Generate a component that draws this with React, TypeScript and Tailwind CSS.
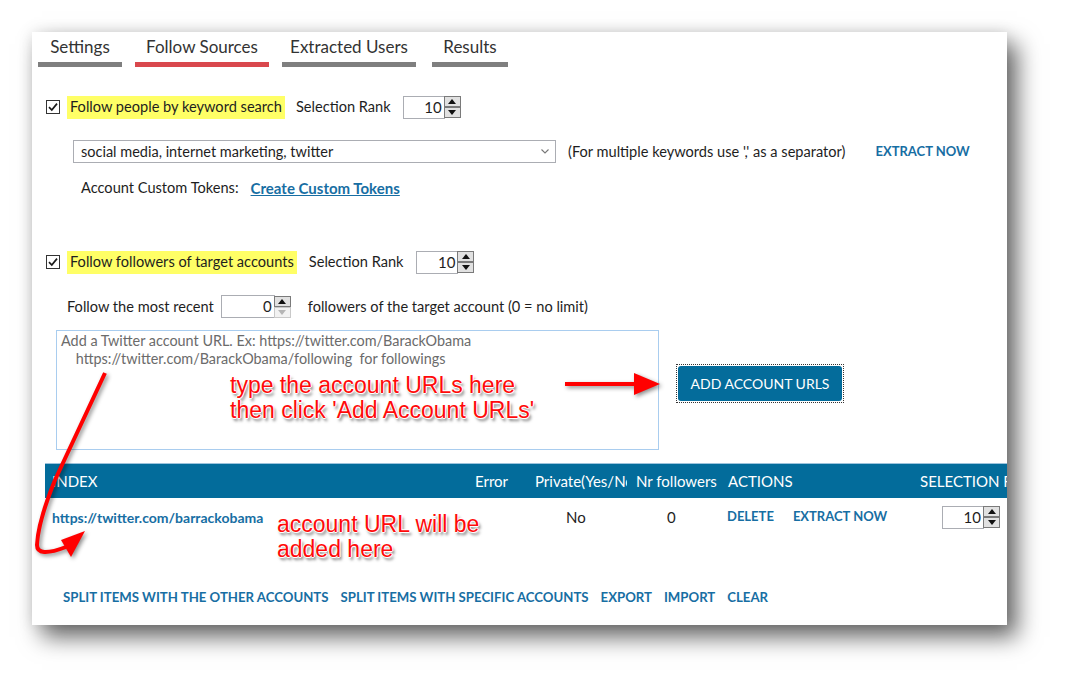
import React from 'react';

const LINK = 'text-[#176ea3]';

const Check = () => (
  <svg width="14" height="14" viewBox="0 0 14 14" className="shrink-0">
    <rect x="0.5" y="0.5" width="13" height="13" fill="#fff" stroke="#333" />
    <path d="M3 7.2 L5.8 10 L11 3.6" fill="none" stroke="#1a1a1a" strokeWidth="1.7" />
  </svg>
);

const Arrow = ({ up, disabled }: { up?: boolean; disabled?: boolean }) => (
  <div
    className={
      'flex h-[11px] items-center justify-center border ' +
      (disabled ? 'border-[#c9c9c9] bg-[#f2f2f2]' : 'border-[#7a7a7a] bg-[#e1e1e1]')
    }
  >
    <svg width="8" height="5" viewBox="0 0 8 5">
      <path d={up ? 'M0 5 L4 0 L8 5 Z' : 'M0 0 L4 5 L8 0 Z'} fill={disabled ? '#b5b5b5' : '#111'} />
    </svg>
  </div>
);

const Spinner = ({ value, w = 42, downOff }: { value: string; w?: number; downOff?: boolean }) => (
  <div className="flex items-center">
    <div
      className="flex h-[23px] items-center justify-end border border-[#abadb3] bg-white pr-[2px] text-[15px] text-[#1e1e1e]"
      style={{ width: w }}
    >
      {value}
    </div>
    <div className="-ml-[1px] flex w-[17px] flex-col">
      <Arrow up />
      <Arrow disabled={downOff} />
    </div>
  </div>
);

const Tab = ({ label, w, active, ml }: { label: string; w: number; active?: boolean; ml: string }) => (
  <div className={'flex flex-col ' + ml} style={{ width: w }}>
    <div className="flex h-[29px] items-center justify-center text-[17px] text-[#333]">{label}</div>
    <div className={'mt-[1px] h-[5px] ' + (active ? 'bg-[#d9484d]' : 'bg-[#7f7f7f]')} />
  </div>
);

const note =
  "[font-family:'Liberation_Sans',Arial,sans-serif] text-[23px] leading-[25px] text-[#ff0a0a] [text-shadow:1px_0_0_#fff,-1px_0_0_#fff,0_1px_0_#fff,0_-1px_0_#fff,2px_3px_3px_rgba(0,0,0,0.55)]";

export default function App() {
  return (
    <div className="relative h-[689px] w-[1072px] overflow-hidden bg-white pl-[32px] pt-[32px] [font-family:'Lato','Noto_Sans',sans-serif] text-[14.6px] text-[#1e1e1e]">
      <div className="h-[593px] w-[975px] overflow-hidden bg-white shadow-[10px_12px_22px_rgba(0,0,0,0.6),0_0_14px_rgba(0,0,0,0.1)]">
        {/* tabs */}
        <div className="flex pl-[6px]">
          <Tab label="Settings" w={84} ml="" />
          <Tab label="Follow Sources" w={134} ml="ml-[13px]" active />
          <Tab label="Extracted Users" w={134} ml="ml-[13px]" />
          <Tab label="Results" w={76} ml="ml-[16px]" />
        </div>

        {/* keyword search */}
        <div className="mt-[28px] flex h-[24px] items-center pl-[14px]">
          <Check />
          <div className="ml-[7px] flex h-[23px] items-center bg-[#ffff66] px-[3px]">Follow people by keyword search</div>
          <span className="ml-[11px]">Selection Rank</span>
          <div className="ml-[12px]">
            <Spinner value="10" />
          </div>
        </div>

        <div className="mt-[21px] flex h-[23px] items-center pl-[41px]">
          <div className="flex h-[23px] w-[483px] items-center justify-between border border-[#abadb3] pl-[7px] pr-[6px] text-[14.5px]">
            <span>social media, internet marketing, twitter</span>
            <svg width="8" height="5" viewBox="0 0 8 5">
              <path d="M0.5 0.5 L4 4 L7.5 0.5" fill="none" stroke="#777" strokeWidth="1.1" />
            </svg>
          </div>
          <span className="ml-[12px]">(For multiple keywords use ',' as a separator)</span>
          <span className={'ml-[30px] text-[13px] font-bold ' + LINK}>EXTRACT NOW</span>
        </div>

        <div className="mt-[15px] flex h-[20px] items-center pl-[49px]">
          <span>Account Custom Tokens:</span>
          <span className={'ml-[12px] text-[15px] font-bold underline ' + LINK}>Create Custom Tokens</span>
        </div>

        {/* target accounts */}
        <div className="mt-[52px] flex h-[24px] items-center pl-[14px]">
          <Check />
          <div className="ml-[7px] flex h-[23px] items-center bg-[#ffff66] px-[3px]">Follow followers of target accounts</div>
          <span className="ml-[12px]">Selection Rank</span>
          <div className="ml-[13px]">
            <Spinner value="10" />
          </div>
        </div>

        <div className="mt-[21px] flex h-[23px] items-center pl-[35px]">
          <span>Follow the most recent</span>
          <div className="ml-[7px]">
            <Spinner value="0" w={54} downOff />
          </div>
          <span className="ml-[17px]">followers of the target account (0 = no limit)</span>
        </div>

        <div className="mt-[12px] flex items-start">
          <div className="ml-[24px] h-[120px] w-[603px] border border-[#a9cdef] pl-[4px] pt-[1px] text-[14.4px] leading-[18px] text-[#6b6b6b]">
            <div>Add a Twitter account URL. Ex: https://twitter.com/BarackObama</div>
            <div className="whitespace-pre">{'    https://twitter.com/BarackObama/following  for followings'}</div>
          </div>
          <div className="ml-[17px] mt-[34px] border border-dotted border-[#333] p-[1px]">
            <div className="flex h-[35px] w-[164px] items-center justify-center rounded-[3px] bg-[#046c9b] text-[14px] text-white">
              ADD ACCOUNT URLS
            </div>
          </div>
        </div>

        {/* table */}
        <div className="ml-[13px] mt-[13px] flex h-[35px] w-[1000px] items-center whitespace-nowrap border-t border-[#9cc3dc] bg-[#036c9b] text-[15px] text-white">
          <div className="w-[425px] pl-[7px]">INDEX</div>
          <div className="w-[60px] pl-[5px]">Error</div>
          <div className="w-[97px] overflow-hidden pl-[5px]">Private(Yes/No)</div>
          <div className="w-[97px] pl-[9px]">Nr followers</div>
          <div className="w-[191px] pl-[4px]">ACTIONS</div>
          <div className="pl-[5px]">SELECTION RANK</div>
        </div>
        <div className="ml-[13px] flex h-[38px] w-[1000px] items-center whitespace-nowrap">
          <div className={'w-[425px] pl-[7px] text-[14px] font-bold ' + LINK}>https://twitter.com/barrackobama</div>
          <div className="w-[60px]" />
          <div className="w-[97px] pl-[36px] text-[15px]">No</div>
          <div className="w-[97px] pl-[40px] text-[15px]">0</div>
          <div className={'flex w-[191px] pl-[3px] text-[13px] font-bold ' + LINK}>
            <span>DELETE</span>
            <span className="ml-[19px]">EXTRACT NOW</span>
          </div>
          <div className="pl-[27px]">
            <Spinner value="10" />
          </div>
        </div>

        <div className={'mt-[52px] flex h-[20px] items-center gap-[12px] pl-[31px] text-[13.2px] font-bold ' + LINK}>
          <span>SPLIT ITEMS WITH THE OTHER ACCOUNTS</span>
          <span>SPLIT ITEMS WITH SPECIFIC ACCOUNTS</span>
          <span>EXPORT</span>
          <span>IMPORT</span>
          <span>CLEAR</span>
        </div>
      </div>

      {/* annotations */}
      <div className={'absolute left-[230px] top-[373px] ' + note}>
        <div>type the account URLs here</div>
        <div>then click 'Add Account URLs'</div>
      </div>
      <div className={'absolute left-[277px] top-[512px] ' + note}>
        <div>account URL will be</div>
        <div>added here</div>
      </div>
      <svg
        className="absolute left-0 top-0 [filter:drop-shadow(2px_2px_2px_rgba(0,0,0,0.45))]"
        width="1072"
        height="689"
        viewBox="0 0 1072 689"
      >
        <path d="M565 384 L638 384" stroke="#f00" strokeWidth="4" />
        <path d="M634 373 L660 384 L634 395 Z" fill="#f00" />
        <path d="M105 373 L55 480 Q38 522 37 545 Q37 558 66 547" fill="none" stroke="#f00" strokeWidth="4" />
        <path d="M85 531 L61 540 L71 557 Z" fill="#f00" />
      </svg>
    </div>
  );
}
